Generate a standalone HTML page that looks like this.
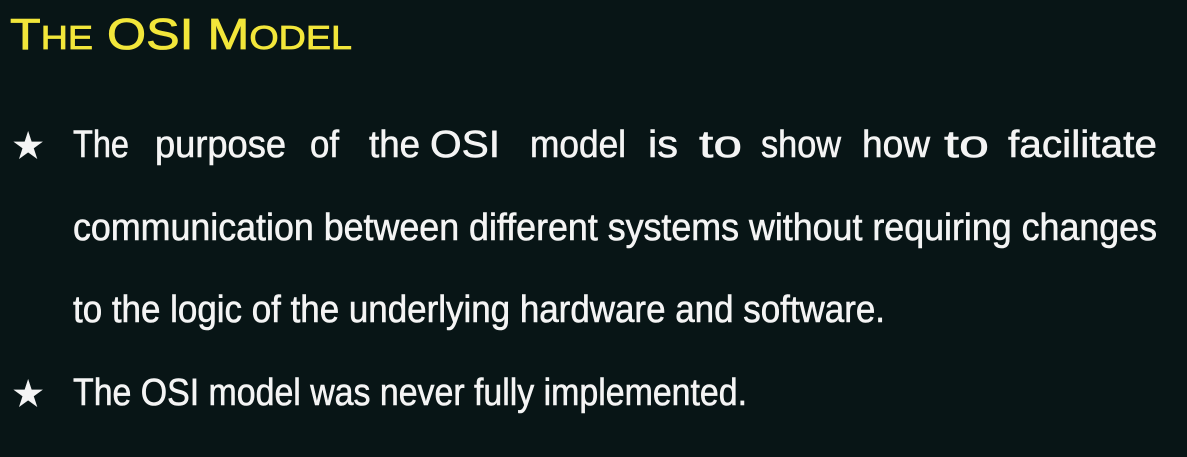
<!DOCTYPE html>
<html><head><meta charset="utf-8"><style>
html,body{margin:0;padding:0;background:#081516;}
svg{display:block}
text{font-family:"Liberation Sans",sans-serif;}
</style></head><body>
<svg width="1187" height="457" viewBox="0 0 1187 457" xmlns="http://www.w3.org/2000/svg">
<rect width="1187" height="457" fill="#081516"/>
<text x="10" y="49" fill="#f2e63a" font-size="44" stroke="#f2e63a" stroke-width="0.8" textLength="342" lengthAdjust="spacingAndGlyphs">T<tspan font-size="33">HE</tspan> OSI M<tspan font-size="33">ODEL</tspan></text>
<g fill="#f4f4f4" font-size="38" stroke="#f4f4f4" stroke-width="0.6">
<text x="12" y="158" font-size="36">★</text>
<text x="73" y="157" textLength="56" lengthAdjust="spacingAndGlyphs">The</text>
<text x="155" y="157" textLength="131" lengthAdjust="spacingAndGlyphs">purpose</text>
<text x="310" y="157" textLength="29" lengthAdjust="spacingAndGlyphs">of</text>
<text x="369" y="157" textLength="51" lengthAdjust="spacingAndGlyphs">the</text>
<text x="430" y="157" textLength="70" lengthAdjust="spacingAndGlyphs">OSI</text>
<text x="530" y="157" textLength="96" lengthAdjust="spacingAndGlyphs">model</text>
<text x="648" y="157" textLength="30" lengthAdjust="spacingAndGlyphs">is</text>
<text x="699" y="157" textLength="43" lengthAdjust="spacingAndGlyphs">to</text>
<text x="761" y="157" textLength="80" lengthAdjust="spacingAndGlyphs">show</text>
<text x="862" y="157" textLength="68" lengthAdjust="spacingAndGlyphs">how</text>
<text x="944" y="157" textLength="45" lengthAdjust="spacingAndGlyphs">to</text>
<text x="1008" y="157" textLength="149" lengthAdjust="spacingAndGlyphs">facilitate</text>
<text x="73" y="240" textLength="1084" lengthAdjust="spacingAndGlyphs">communication between different systems without requiring changes</text>
<text x="73" y="322" textLength="812" lengthAdjust="spacingAndGlyphs">to the logic of the underlying hardware and software.</text>
<text x="12" y="406" font-size="36">★</text>
<text x="73" y="405" textLength="674" lengthAdjust="spacingAndGlyphs">The OSI model was never fully implemented.</text>
</g>
</svg>
</body></html>
